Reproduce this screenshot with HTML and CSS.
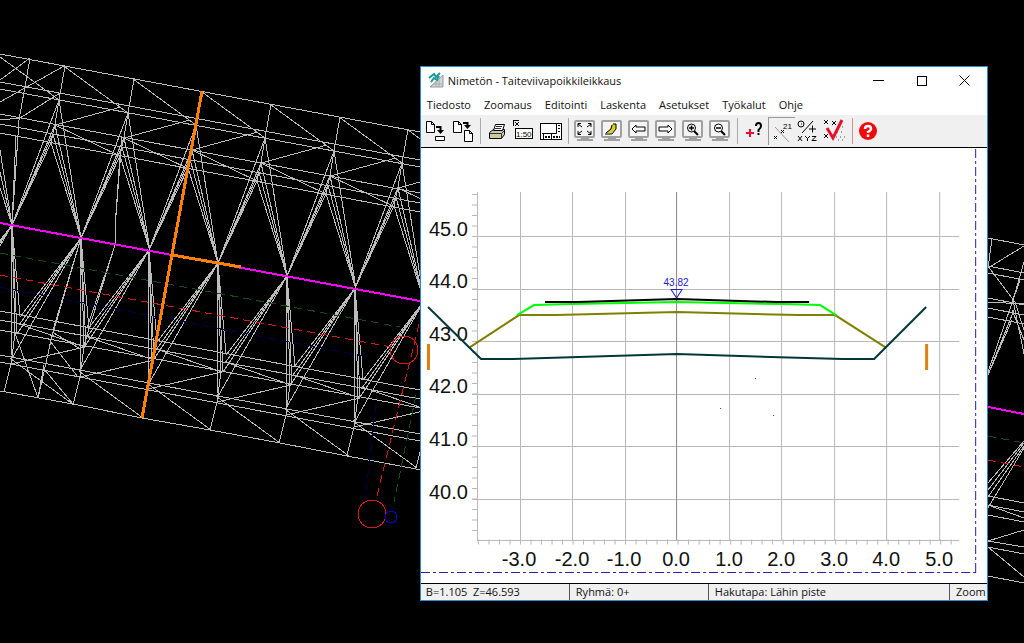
FILE: index.html
```
<!DOCTYPE html>
<html lang="fi">

<head>
    <meta charset="UTF-8">
    <meta name="viewport" content="width=device-width, initial-scale=1.0">
    <title>Taiteviivapoikkileikkaus</title>
    <link rel="stylesheet" href="styles.css">
</head>

<body>
    <main class="desktop">
        <!-- terrain model -->
        <svg class="model" viewBox="0 0 1024 643" aria-hidden="true">
            <defs>
                <g id="upper">
                    <path d="M271 104L265 138L261 162L257 181M202 92L265 138"/>
                    <path d="M265 138L218 263L261 163M259 172L218 263L257 181"/>
                    <path d="M265 138L287 276L261 163M259 172L287 276L257 181"/>
                    <path d="M261 163L327 145M261 163L326 194"/>
                </g>
                <g id="lower">
                    <path d="M218 263L226 354M218 263L223 372M218 263L217 397M218 263L221 372L217 402L210 430"/>
                    <path d="M218 263L157 342M218 263L156 350M218 263L154 359M218 263L148 385"/>
                    <path d="M217 397L280 443M217 402L291 385M225 362L291 385"/>
                </g>
            </defs>
            <g class="mesh">
                <path d="M0 54L420 132M0 82L420 160M0 89L420 167M0 114L420 193M0 124L420 203M0 133L420 212"/>
                <path d="M0 311L420 390M0 320L420 399M0 330L420 408M0 355L420 434M0 362L420 441M0 391L73 404L142 418L210 430L280 443L347 456L416 469L420 470"/>
                <use href="#upper" x="-206" y="-38"/>
                <use href="#upper" x="-137" y="-25"/>
                <use href="#upper" x="-69" y="-13"/>
                <use href="#upper"/>
                <use href="#upper" x="69" y="13"/>
                <use href="#upper" x="137" y="25"/>
                <use href="#upper" x="206" y="38"/>
                <use href="#lower" x="-206" y="-38"/>
                <use href="#lower" x="-137" y="-25"/>
                <use href="#lower" x="-69" y="-13"/>
                <use href="#lower"/>
                <use href="#lower" x="69" y="13"/>
                <use href="#lower" x="137" y="25"/>
                <use href="#lower" x="206" y="38"/>
                <!-- extra sections between the regular ones -->
                <path d="M30 58L24 92L19 120L12 225L16 135M18 137L12 225M30 58L0 80M64 66L0 102M60 93L20 118L0 120M0 150L12 225L0 172M0 188L12 225"/>
                <path d="M122 137L115 228V245L87 328M120 155L115 228M115 245L84 345M81 238L51 340L44 372L38 398L44 365M81 238L53 330M52 332L79 348M50 341L78 377M15 333L38 398M44 369L73 404"/>
                <!-- right of the dialog -->
                <path d="M988 238L1024 245M988 266L1024 273M988 273L1024 280M988 298L1024 305M988 302L1024 304M988 308L1024 315M988 317L1024 324"/>
                <path d="M992 239L988 268L1024 246M988 266L1015 302L1024 330M1024 262L1013 300L988 372L1020 280M1014 310L988 375L1012 320M1013 300L1024 354M1012 310L1024 340"/>
                <path d="M1024 441L988 483M1024 443L988 490M1024 446L988 497M1024 448L988 508"/>
                <path d="M988 496L1024 503M988 505L1024 512L1024 518L988 505M988 515L1024 522M988 541L1024 530M988 541L1024 547M988 547L1024 554M988 547L1024 577M988 576L1024 583"/>
            </g>
            <path class="centre" d="M0 223L172 255L420 301M988 407L1024 414"/>
            <path class="guide green" d="M0 253L400 327M988 436L1024 443M416 395L394 502"/>
            <path class="guide red" d="M0 275L391 347M988 460L1024 467"/>
            <path class="guide red" d="M419 324L376 500"/>
            <path class="guide blue" d="M0 287L369 357M376 405L365 500"/>
            <circle class="ring red" cx="404" cy="350" r="14"/>
            <circle class="ring red" cx="372" cy="514" r="14"/>
            <circle class="ring blue" cx="391" cy="517" r="6"/>
            <path class="section" d="M202 91L142 418M172 255L241 267"/>
        </svg>

        <section class="window">
            <header class="titlebar">
                <svg class="app-icon" viewBox="0 0 16 16">
                    <path d="M2 15L15 3V15Z" fill="#cfd8d8" stroke="#999"/>
                    <path d="M1 6L6 2L8 5L12 1M3 10L6 6L9 8L11 4" fill="none" stroke="#1a9a9a" stroke-width="2"/>
                    <path d="M5 12H14M8 9V15M11 6V15" stroke="#aaa"/>
                </svg>
                <h1 class="title">Nimetön - Taiteviivapoikkileikkaus</h1>
                <div class="controls">
                    <button type="button" aria-label="Pienennä"><svg viewBox="0 0 11 11"><path d="M0 5.500H11"/></svg></button>
                    <button type="button" aria-label="Suurenna"><svg viewBox="0 0 11 11"><path d="M1.500 1.500H10.500V10.500H1.500Z"/></svg></button>
                    <button type="button" aria-label="Sulje"><svg class="smooth" viewBox="0 0 11 11"><path d="M.5 .5L10.500 10.500M10.500 .5L.5 10.500"/></svg></button>
                </div>
            </header>

            <nav class="menu">
                <button type="button">Tiedosto</button>
                <button type="button">Zoomaus</button>
                <button type="button">Editointi</button>
                <button type="button">Laskenta</button>
                <button type="button">Asetukset</button>
                <button type="button">Työkalut</button>
                <button type="button">Ohje</button>
            </nav>

            <div class="toolbar">
                <svg class="defs">
                    <defs>
                        <g id="screen">
                            <rect x="2" y="2" width="19" height="16" rx="1" fill="#f4f4f4" stroke="#a0a0a0" stroke-width="2"/>
                            <path d="M9 19H15V20H9ZM4 21H20" fill="#a0a0a0" stroke="#a0a0a0" stroke-width="2"/>
                        </g>
                    </defs>
                </svg>
                <button type="button" aria-label="Lue tiedosto">
                    <svg viewBox="0 0 24 24"><path d="M2.500 2.500H7.500L10.500 5.500V13.500H2.500ZM7.500 2.500V5.500H10.500M11.500 17.500H20.500V21.500H11.500Z" fill="#fff" stroke="#000"/><path d="M12 8H16.500V12" fill="none" stroke="#000" stroke-width="2"/><path d="M13 11H20L16.500 15Z" fill="#000"/></svg>
                </button>
                <button type="button" aria-label="Kopioi tiedosto">
                    <svg viewBox="0 0 24 24"><path d="M2.500 2.500H7.500L10.500 5.500V13.500H2.500ZM7.500 2.500V5.500H10.500M13.500 11.500H18.500L21.500 14.500V22.500H13.500ZM18.500 11.500V14.500H21.500" fill="#fff" stroke="#000"/><path d="M12 4H16.500V6" fill="none" stroke="#000" stroke-width="2"/><path d="M13 6H20L16.500 10Z" fill="#000"/></svg>
                </button>
                <span class="sep"></span>
                <button type="button" aria-label="Tulosta">
                    <svg viewBox="0 0 24 24"><path d="M4.500 13.500L8.500 10.500H19.500V15.500L16.500 19.500H4.500Z" fill="#c8c8b8" stroke="#000"/><path d="M8.500 11.500L10.500 5.500H19.500L17.500 11.500Z" fill="#fff" stroke="#000"/><path d="M11 7.500H17M10 9.500H16M5 14.500H16.500L19 12M16.500 15V19" stroke="#333"/><path d="M7 17H14" stroke="#d8d820"/></svg>
                </button>
                <button type="button" aria-label="Mittakaava">
                    <svg viewBox="0 0 24 24"><path d="M1.500 1.500H7M1.500 1V7M3 3L7 7M7 3L3 7" stroke="#000"/><rect x="3.500" y="9.500" width="17" height="10" fill="#fff" stroke="#000"/><text x="4" y="18" class="scale">1:50</text></svg>
                </button>
                <button type="button" aria-label="Piirustus">
                    <svg viewBox="0 0 24 24"><rect x="1.500" y="4.500" width="21" height="16" fill="#fff" stroke="#000"/><path d="M3 14.500H17.500V5M4.500 15V20M12.500 15V20" stroke="#000"/><path d="M20 6V14" stroke="#000" stroke-width="2" stroke-dasharray="1 2"/><path d="M6 18H11M14 18H21" stroke="#000" stroke-width="2" stroke-dasharray="2 1"/></svg>
                </button>
                <span class="sep"></span>
                <button type="button" aria-label="Zoomaa kaikki">
                    <svg viewBox="0 0 24 24"><use href="#screen"/><path d="M5 8V4.500H8M5 5L9 8M15 4.500H18V8M18 5L14 8M5 12V15.500H8M5 15L9 12M15 15.500H18V12M18 15L14 12" fill="none" stroke="#000"/></svg>
                </button>
                <button type="button" aria-label="Siirrä kuvaa">
                    <svg viewBox="0 0 24 24"><use href="#screen"/><path d="M6 14L10 10L12 5H16V10L12 14Z" fill="#d8cf20"/><path d="M13 5H16V10L12 15H5M6 14L11 10L12 6" fill="none" stroke="#000"/></svg>
                </button>
                <button type="button" aria-label="Edellinen näkymä">
                    <svg viewBox="0 0 24 24"><use href="#screen"/><path d="M5 10L9 6V8H18V12H9V14Z" fill="#fff" stroke="#000"/></svg>
                </button>
                <button type="button" aria-label="Seuraava näkymä">
                    <svg viewBox="0 0 24 24"><use href="#screen"/><path d="M18 10L14 6V8H5V12H14V14Z" fill="#fff" stroke="#000"/></svg>
                </button>
                <button type="button" aria-label="Lähennä">
                    <svg viewBox="0 0 24 24"><use href="#screen"/><path d="M13 12L17 16" stroke="#000" stroke-width="2"/><circle cx="10.500" cy="9" r="4" fill="#fff" stroke="#000"/><path d="M8 9H13M10.500 6.500V11.500" stroke="#000" stroke-width="1.500"/></svg>
                </button>
                <button type="button" aria-label="Loitonna">
                    <svg viewBox="0 0 24 24"><use href="#screen"/><path d="M13 12L17 16" stroke="#000" stroke-width="2"/><circle cx="10.500" cy="9" r="4" fill="#fff" stroke="#000"/><path d="M8 9H13" stroke="#000" stroke-width="1.500"/></svg>
                </button>
                <span class="sep"></span>
                <button type="button" aria-label="Pisteen tiedot">
                    <svg viewBox="0 0 24 24"><path d="M4 14H12M8 10V18" stroke="#e8112d" stroke-width="2"/><path d="M14 7Q14 4 16.500 4T19 7Q19 9 16.500 11V13M16.500 14V16" fill="none" stroke="#000" stroke-width="2"/></svg>
                </button>
                <button type="button" class="pressed" aria-label="Pistenumerot">
                    <svg viewBox="0 0 24 24"><path d="M5 7L19 22" stroke="#999"/><path d="M4 16L7 19M7 16L4 19M11 10L14 13M14 10L11 13" stroke="#000"/><text x="13" y="9">21</text></svg>
                </button>
                <button type="button" aria-label="Koordinaatit">
                    <svg viewBox="0 0 24 24"><circle cx="5" cy="5" r="3" fill="none" stroke="#000"/><path d="M5 5H6M6 14L17 2M13 10H20M16.500 6.500V13.500" stroke="#000"/><path d="M2 17L6 22M6 17L2 22M9 17L11.500 19.500L14 17M11.500 19.500V22M16 17.500H20L16 21.500H20.500" fill="none" stroke="#000"/></svg>
                </button>
                <button type="button" aria-label="Tarkista">
                    <svg viewBox="0 0 24 24"><path d="M1 1L5 5M5 1L1 5M9 2L13 6M13 2L9 6M1 15L5 19M5 15L1 19" stroke="#000"/><path d="M15 8H22M14 13H22M13 18H22M15 21H22" stroke="#555" stroke-dasharray="1 3"/><path d="M4 9L10 19L19 1" fill="none" stroke="#e8112d" stroke-width="3"/></svg>
                </button>
                <span class="sep pink"></span>
                <button type="button" aria-label="Ohje">
                    <svg viewBox="0 0 24 24"><circle cx="11" cy="12" r="9" fill="#f00a0a"/><path d="M8 10Q8 7 11 7T14 10Q14 11 11 13V14M11 15.500V18" fill="none" stroke="#fff" stroke-width="2.500"/></svg>
                </button>
            </div>

            <!-- cross section, 52.5 units = 1 m -->
            <svg class="chart" viewBox="421 148 566 435" role="img" aria-label="Poikkileikkaus">
                <path class="grid" d="M520.500 192V540M572.500 192V540M625.500 192V540M729.500 192V540M781.500 192V540M834.500 192V540M886.500 192V540M939.500 192V540M477.500 192V540"/>
                <path class="grid" d="M472 236.500H959M472 289.500H959M472 341.500H959M472 394.500H959M472 446.500H959M472 499.500H959M477 540.500H959"/>
                <path class="grid zero" d="M676.500 192V540"/>
                <path class="ticks" d="M474.500 194V540"/>
                <path class="ticks" d="M478 542H959"/>
                <path class="frame" d="M421 572.500H976M975.500 149V572"/>

                <g class="label">
                    <text x="429" y="236">45.0</text>
                    <text x="429" y="288">44.0</text>
                    <text x="429" y="341">43.0</text>
                    <text x="429" y="393">42.0</text>
                    <text x="429" y="446">41.0</text>
                    <text x="429" y="499">40.0</text>
                </g>
                <g class="label middle">
                    <text x="519" y="566">-3.0</text>
                    <text x="572" y="566">-2.0</text>
                    <text x="624" y="566">-1.0</text>
                    <text x="676" y="566">0.0</text>
                    <text x="729" y="566">1.0</text>
                    <text x="781" y="566">2.0</text>
                    <text x="834" y="566">3.0</text>
                    <text x="886" y="566">4.0</text>
                    <text x="939" y="566">5.0</text>
                </g>

                <path class="layer sub" d="M470 347L519 315L556 315L677 312L798 315L835 315L885 347"/>
                <path class="layer base" d="M517 315L534 305L571 304L677 302L784 304L820 305L836 315"/>
                <path class="layer top" d="M545 302L578 302L677 299L776 302L809 302"/>
                <path class="layer ditch" d="M428 307L481 359L513 359L677 354L842 359L874 359L926 307"/>
                <path class="limit" d="M428.500 344V370M926.500 344V370"/>
                <path class="level" d="M671 289.500H682L676.500 298Z"/>
                <text class="level-text" x="676" y="286">43.82</text>
                <path class="dots" d="M755 378.500H756M720 408.500H721M773 415.500H774"/>
            </svg>

            <footer class="status">
                <span class="pos">B=1.105&nbsp; Z=46.593</span>
                <span>Ryhmä: 0+</span>
                <span>Hakutapa: Lähin piste</span>
                <span>Zoom</span>
            </footer>
        </section>
    </main>
</body>

</html>
```
FILE: styles.css
```
* {
    box-sizing: border-box;
}

:root {
    --accent: #2a8ad4;
    --bar: #f0f0f0;
    --mesh: #bcbcbc;
    --app-font: 'Open Sans', 'Noto Sans', sans-serif;
}

body {
    margin: 0;
    background-color: #000;
    font-family: var(--app-font);
    font-size: 11px;
    color: #111;
}

button {
    padding: 0;
    border: 0;
    background: none;
    font: inherit;
    color: inherit;
}

.desktop {
    position: relative;
    overflow: hidden;
}

/* terrain model */
.model {
    display: block;
    width: 100%;
    fill: none;
    shape-rendering: crispEdges;
}

.mesh {
    stroke: var(--mesh);
}

.centre {
    stroke: #f0f;
    stroke-width: 2;
}

.section {
    stroke: #ff8000;
    stroke-width: 3;
}

.guide {
    stroke-dasharray: 8 5;
}

.red {
    stroke: #d81818;
}

.green {
    stroke: #105010;
}

.guide.blue {
    stroke: #000048;
}

.ring.blue {
    stroke: #0000c8;
}

/* dialog window */
.window {
    position: absolute;
    top: 66px;
    left: 41%;
    right: 36px;
    border: 1px solid var(--accent);
    background-color: #fff;
}

.titlebar {
    display: flex;
    align-items: center;
    height: 26px;
    padding: 0 1px 0 7px;
}

.app-icon {
    width: 16px;
    height: 16px;
    margin-right: 4px;
}

.title {
    flex: auto;
    margin: 0;
    font-size: 11px;
    font-weight: 400;
}

.controls {
    display: flex;
}

.controls button {
    display: flex;
    justify-content: center;
    align-items: center;
    width: 43px;
    height: 26px;
}

.controls svg {
    width: 11px;
    height: 11px;
    fill: none;
    stroke: #000;
    shape-rendering: crispEdges;
}

.controls .smooth {
    shape-rendering: auto;
}

.menu {
    display: flex;
    gap: 13px;
    height: 22px;
    padding-left: 6px;
}

.toolbar {
    display: flex;
    align-items: center;
    height: 33px;
    padding-left: 2px;
    background-color: var(--bar);
    border-bottom: 1px solid #000;
}

.toolbar .defs {
    position: absolute;
    width: 0;
    height: 0;
}

.toolbar button {
    display: flex;
    justify-content: center;
    align-items: center;
    width: 27px;
    height: 28px;
}

.toolbar button svg {
    width: 24px;
    height: 24px;
    fill: none;
}

.toolbar .pressed {
    border-top: 1px solid #999;
    border-left: 1px solid #999;
}

.sep {
    width: 7px;
    height: 26px;
    background: linear-gradient(#aaa, #aaa) center / 1px 100% no-repeat;
}

.sep.pink {
    background-image: linear-gradient(#d09090, #d09090);
}

.toolbar text {
    fill: #000;
    font-family: 'Liberation Sans', sans-serif;
    font-size: 8px;
}

/* chart */
.chart {
    display: block;
    width: 100%;
    fill: none;
    font-family: 'Liberation Sans', sans-serif;
}

.grid,
.ticks {
    stroke: #b8b8b8;
}

.grid.zero {
    stroke: #888;
}

.ticks {
    stroke-width: 5;
    stroke-dasharray: 1 9.5;
}

.frame {
    stroke: #2b1fb4;
    stroke-dasharray: 9 3 3 3;
}

.label {
    fill: #111;
    font-size: 20px;
}

.middle {
    text-anchor: middle;
}

.layer {
    stroke-width: 2;
}

.sub {
    stroke: #808000;
}

.base {
    stroke: #0f0;
}

.top {
    stroke: #000;
}

.ditch {
    stroke: #003838;
}

.limit {
    stroke: #e08010;
    stroke-width: 3;
}

.level {
    stroke: #2020d0;
}

.level-text {
    fill: #2020d0;
    font-size: 10px;
    text-anchor: middle;
}

.dots {
    stroke: #444;
}

/* status bar */
.status {
    display: grid;
    grid-template-columns: 148px 139px 1fr 38px;
    height: 17px;
    background-color: var(--bar);
    border-top: 1px solid #000;
    line-height: 16px;
    white-space: nowrap;
}

.status span {
    padding-left: 5px;
    overflow: hidden;
}

.status span + span {
    padding-left: 6px;
    border-left: 1px solid #555;
}
```
